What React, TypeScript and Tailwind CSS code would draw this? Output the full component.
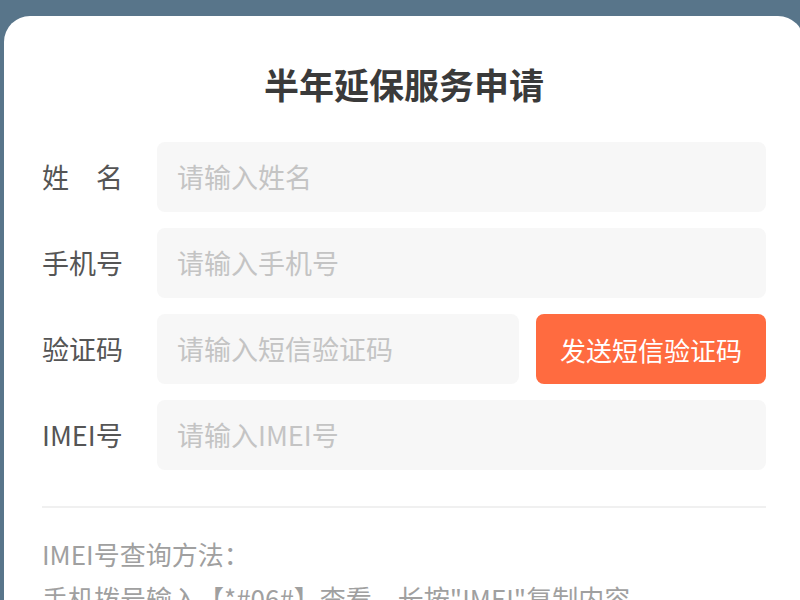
export default function App() {
  const rows = [
    { label: "姓\u3000名", placeholder: "请输入姓名" },
    { label: "手机号", placeholder: "请输入手机号" },
  ]

  return (
    <div
      className="w-[800px] h-[600px] overflow-hidden bg-[#58758a] pt-4"
      style={{ fontFamily: '"Noto Sans CJK SC", "Noto Sans", sans-serif' }}
    >
      <div className="ml-1 w-[800px] h-[640px] bg-white rounded-t-[26px] pt-[44px] px-[38px]">
        <h1 className="text-center text-[35px] leading-[48px] font-bold text-[#3a3a3a]">半年延保服务申请</h1>

        <div className="mt-[34px] flex flex-col gap-4">
          {rows.map((r) => (
            <div key={r.placeholder} className="flex items-center">
              <div className="w-[115px] text-[27px] text-[#555]">{r.label}</div>
              <div className="flex-1 h-[70px] rounded-lg bg-[#f7f7f7] px-5 flex items-center text-[27px] text-[#c4c4c4]">
                {r.placeholder}
              </div>
            </div>
          ))}

          <div className="flex items-center">
            <div className="w-[115px] text-[27px] text-[#555]">验证码</div>
            <div className="flex-1 h-[70px] rounded-lg bg-[#f7f7f7] px-5 flex items-center text-[27px] text-[#c4c4c4]">
              请输入短信验证码
            </div>
            <button className="ml-[17px] w-[230px] h-[70px] rounded-lg bg-[#ff6b40] text-white text-[26px]">
              发送短信验证码
            </button>
          </div>

          <div className="flex items-center">
            <div className="w-[115px] text-[27px] text-[#555]">IMEI号</div>
            <div className="flex-1 h-[70px] rounded-lg bg-[#f7f7f7] px-5 flex items-center text-[27px] text-[#c4c4c4]">
              请输入IMEI号
            </div>
          </div>
        </div>

        <div className="mt-[36px] h-[2px] bg-[#f0f0f0]" />

        <div className="mt-[28px] text-[26px] leading-[36px] text-[#a0a0a0]">
          <p>IMEI号查询方法：</p>
          <p className="mt-2">手机拨号输入【*#06#】查看，长按"IMEI"复制内容，</p>
        </div>
      </div>
    </div>
  )
}
